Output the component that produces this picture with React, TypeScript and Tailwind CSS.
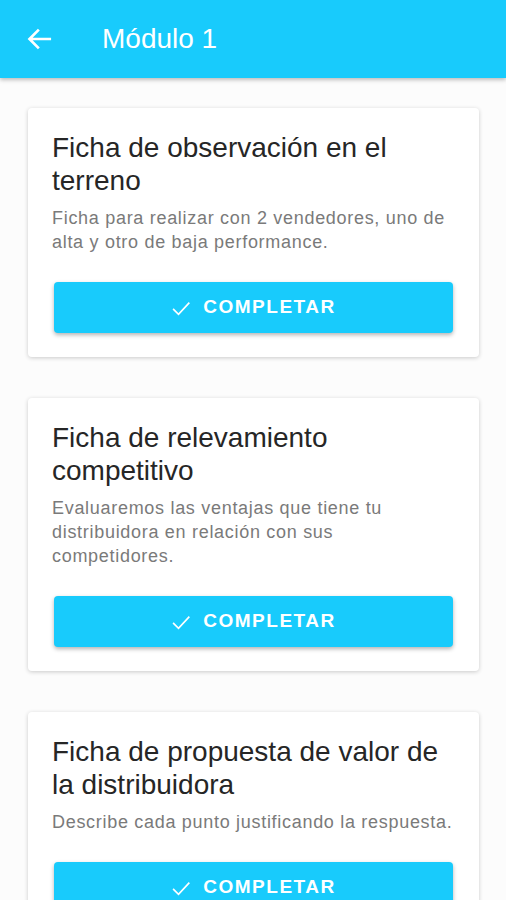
import React from 'react';

type Ficha = { title: string; desc: string };

const fichas: Ficha[] = [
  {
    title: 'Ficha de observación en el terreno',
    desc: 'Ficha para realizar con 2 vendedores, uno de alta y otro de baja performance.',
  },
  {
    title: 'Ficha de relevamiento competitivo',
    desc: 'Evaluaremos las ventajas que tiene tu distribuidora en relación con sus competidores.',
  },
  {
    title: 'Ficha de propuesta de valor de la distribuidora',
    desc: 'Describe cada punto justificando la respuesta.',
  },
];

function FichaCard({ ficha }: { ficha: Ficha }) {
  return (
    <div className="bg-white rounded-[4px] shadow-[0_1px_4px_rgba(0,0,0,0.2)] pl-6 pr-5 pt-[23px] pb-6">
      <h2 className="text-[28px] leading-[33px] text-[#262626]">{ficha.title}</h2>
      <p className="mt-[9px] text-[18px] leading-[24px] tracking-[0.7px] text-[#7a7a7a]">{ficha.desc}</p>
      <button className="mt-[28px] ml-[2px] w-[399px] h-[51px] flex items-center justify-center gap-[12px] rounded-[4px] bg-[#18cbfc] text-white font-bold text-[19px] tracking-[1.5px] shadow-[0_2px_4px_rgba(0,0,0,0.3)]">
        <svg width="20" height="20" viewBox="0 0 24 24" fill="none" stroke="white" strokeWidth="2">
          <path d="M2.5 13l6.5 6.5L22 5.5" />
        </svg>
        COMPLETAR
      </button>
    </div>
  );
}

export default function App() {
  return (
    <div className="w-[506px] h-[900px] overflow-hidden bg-[#fcfcfc]" style={{ fontFamily: '"Liberation Sans", Arial, sans-serif' }}>
      {/* Top bar */}
      <div className="h-[78px] bg-[#18cbfc] flex items-center shadow-[0_2px_4px_rgba(0,0,0,0.25)] relative z-10">
        <svg className="ml-[26px]" width="28" height="28" viewBox="0 0 24 24" fill="none" stroke="white" strokeWidth="2.3">
          <path d="M21.5 12H3M11 4L3 12l8 8" />
        </svg>
        <span className="ml-[48px] text-white text-[28px]">Módulo 1</span>
      </div>

      <div className="pl-[28px] pr-[27px] pt-[30px] flex flex-col gap-[41px]">
        {fichas.map((f, i) => (
          <FichaCard key={i} ficha={f} />
        ))}
      </div>
    </div>
  );
}
